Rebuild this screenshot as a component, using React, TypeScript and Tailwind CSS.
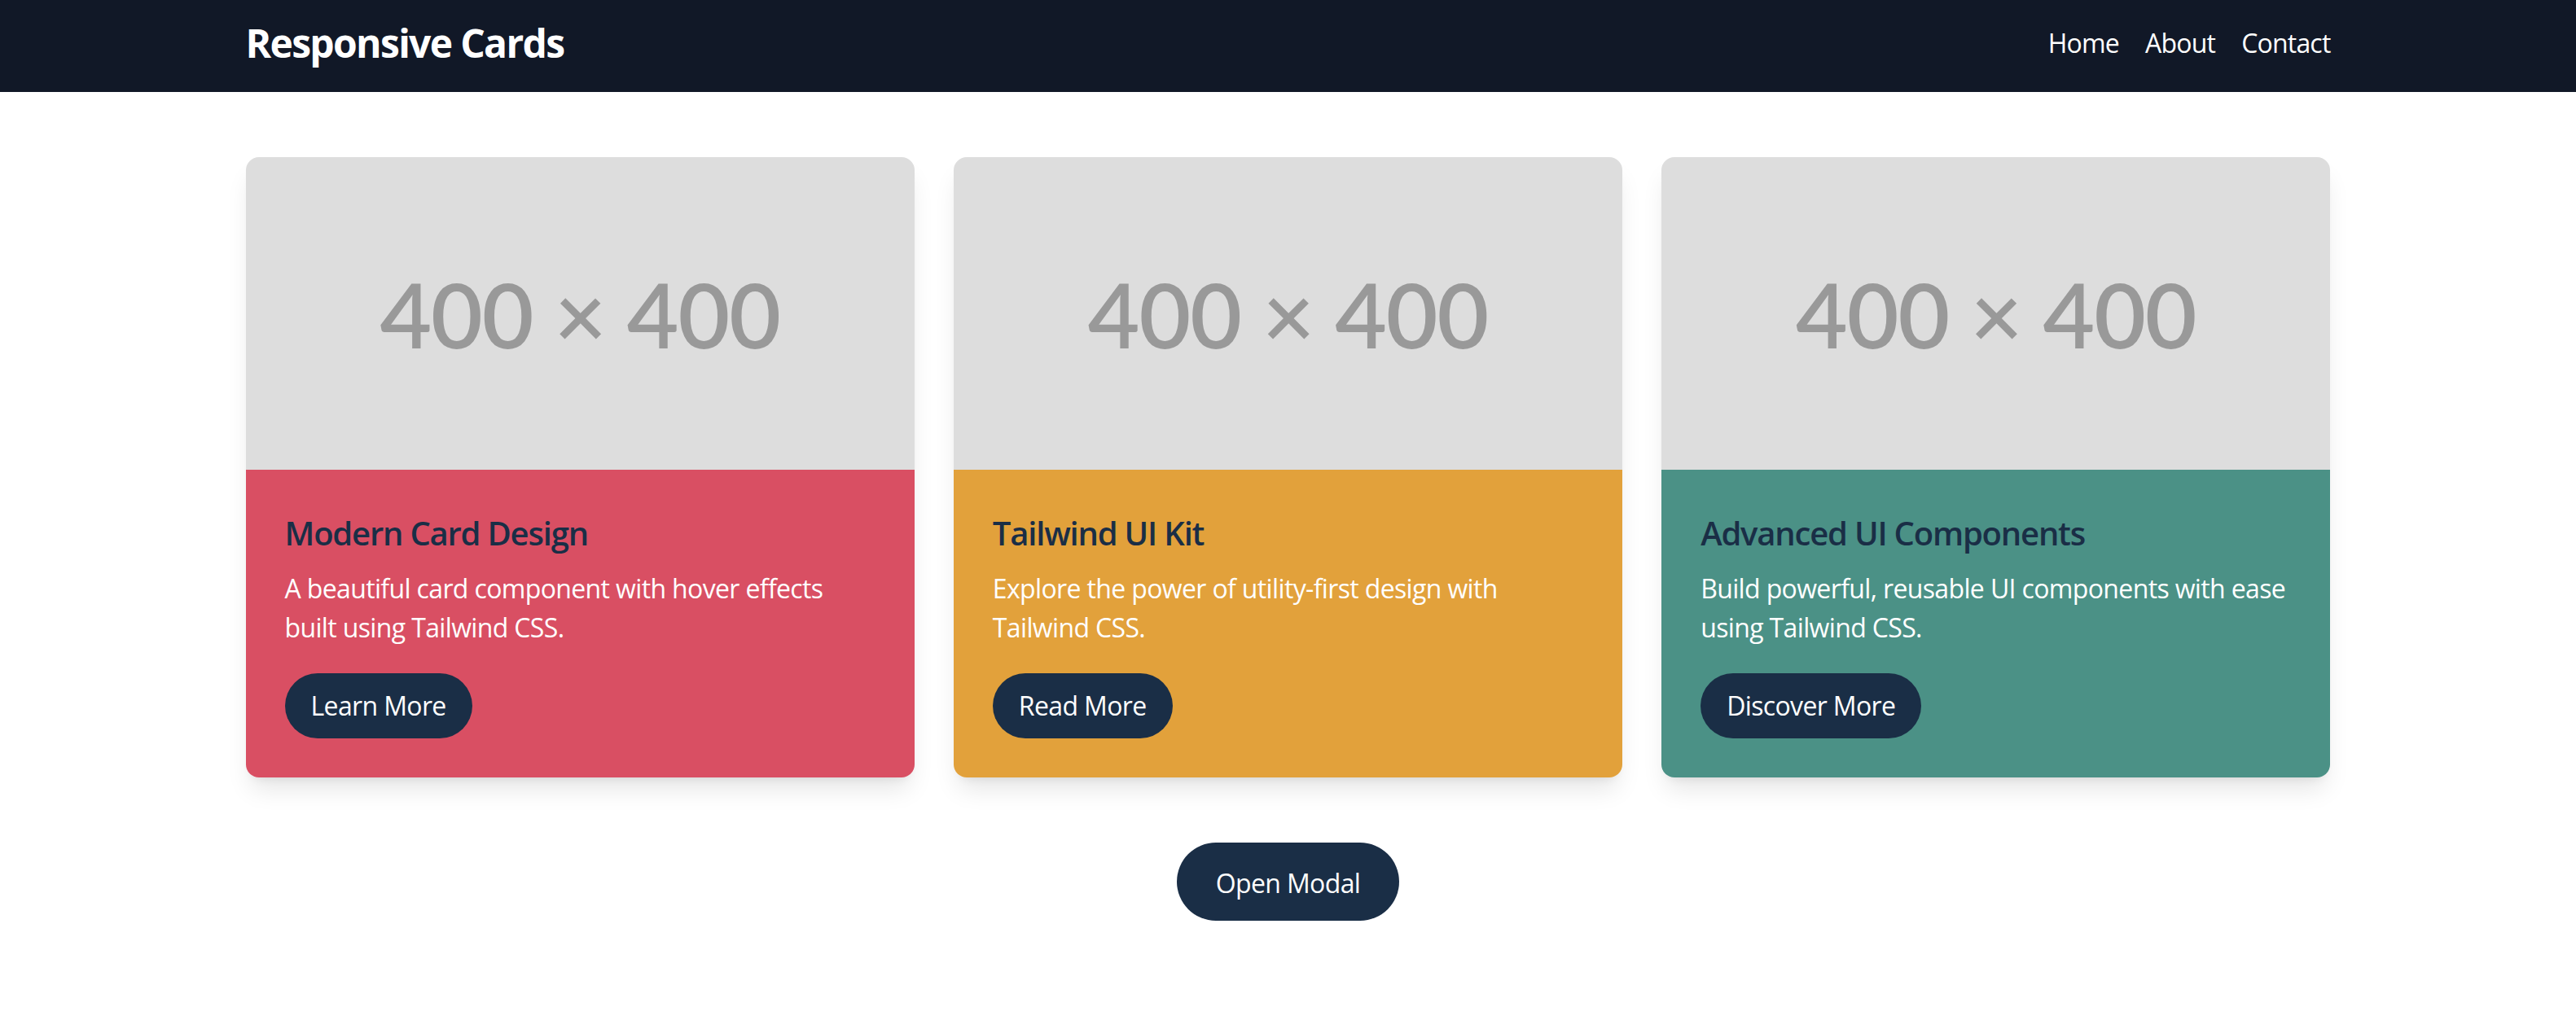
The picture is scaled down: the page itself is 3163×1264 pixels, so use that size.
import React from 'react';

interface CardProps {
    title: string;
    text: string;
    action: string;
    tone: string;
}

const cards: CardProps[] = [
    {
        title: 'Modern Card Design',
        text: 'A beautiful card component with hover effects built using Tailwind CSS.',
        action: 'Learn More',
        tone: 'bg-[#d94f63]',
    },
    {
        title: 'Tailwind UI Kit',
        text: 'Explore the power of utility-first design with Tailwind CSS.',
        action: 'Read More',
        tone: 'bg-[#e2a13b]',
    },
    {
        title: 'Advanced UI Components',
        text: 'Build powerful, reusable UI components with ease using Tailwind CSS.',
        action: 'Discover More',
        tone: 'bg-[#4b9186]',
    },
];

const Card: React.FC<CardProps> = ({ title, text, action, tone }) => {
    return (
        <div className="overflow-hidden rounded-2xl bg-white shadow-[0_20px_30px_-6px_rgba(0,0,0,0.1),0_8px_12px_-8px_rgba(0,0,0,0.1)]">
            {/* placeholder image */}
            <div className="flex h-[384px] items-center justify-center bg-[#dddddd]">
                <span className="font-['Lato',sans-serif] text-[110px] leading-none font-semibold tracking-[-0.01em] text-[#999999]">
                    400 × 400
                </span>
            </div>
            <div className={`px-12 pt-[50px] pb-12 ${tone}`}>
                <h2 className="mb-4 text-[40px] leading-[56px] font-semibold tracking-[-0.03em] text-[#1a2e46]">{title}</h2>
                <p className="mb-8 text-[32px] leading-[48px] tracking-[-0.02em] text-white">{text}</p>
                <button className="rounded-full bg-[#1a2e46] px-8 py-4 text-[32px] leading-[48px] tracking-[-0.02em] text-white">
                    {action}
                </button>
            </div>
        </div>
    );
};

export default function App() {
    return (
        <div className="min-h-screen bg-white font-['Open_Sans',sans-serif]">
            <header className="bg-[#111827]">
                <div className="mx-auto flex h-[113px] max-w-[2560px] items-center justify-between pb-[8px]">
                    <h1 className="text-[48px] leading-[64px] font-bold tracking-[-0.035em] text-white">Responsive Cards</h1>
                    <nav className="flex gap-8 text-[32px] leading-[48px] tracking-[-0.025em] text-white">
                        <a href="#">Home</a>
                        <a href="#">About</a>
                        <a href="#">Contact</a>
                    </nav>
                </div>
            </header>

            <main className="mx-auto max-w-[2560px] py-20">
                <div className="grid grid-cols-3 gap-12">
                    {cards.map((card) => (
                        <Card key={card.title} {...card} />
                    ))}
                </div>
                <div className="mt-20 flex justify-center">
                    <button className="rounded-full bg-[#1a2e46] px-12 pt-[26px] pb-[22px] text-[32px] leading-[48px] tracking-[-0.02em] text-white">
                        Open Modal
                    </button>
                </div>
            </main>
        </div>
    );
}
